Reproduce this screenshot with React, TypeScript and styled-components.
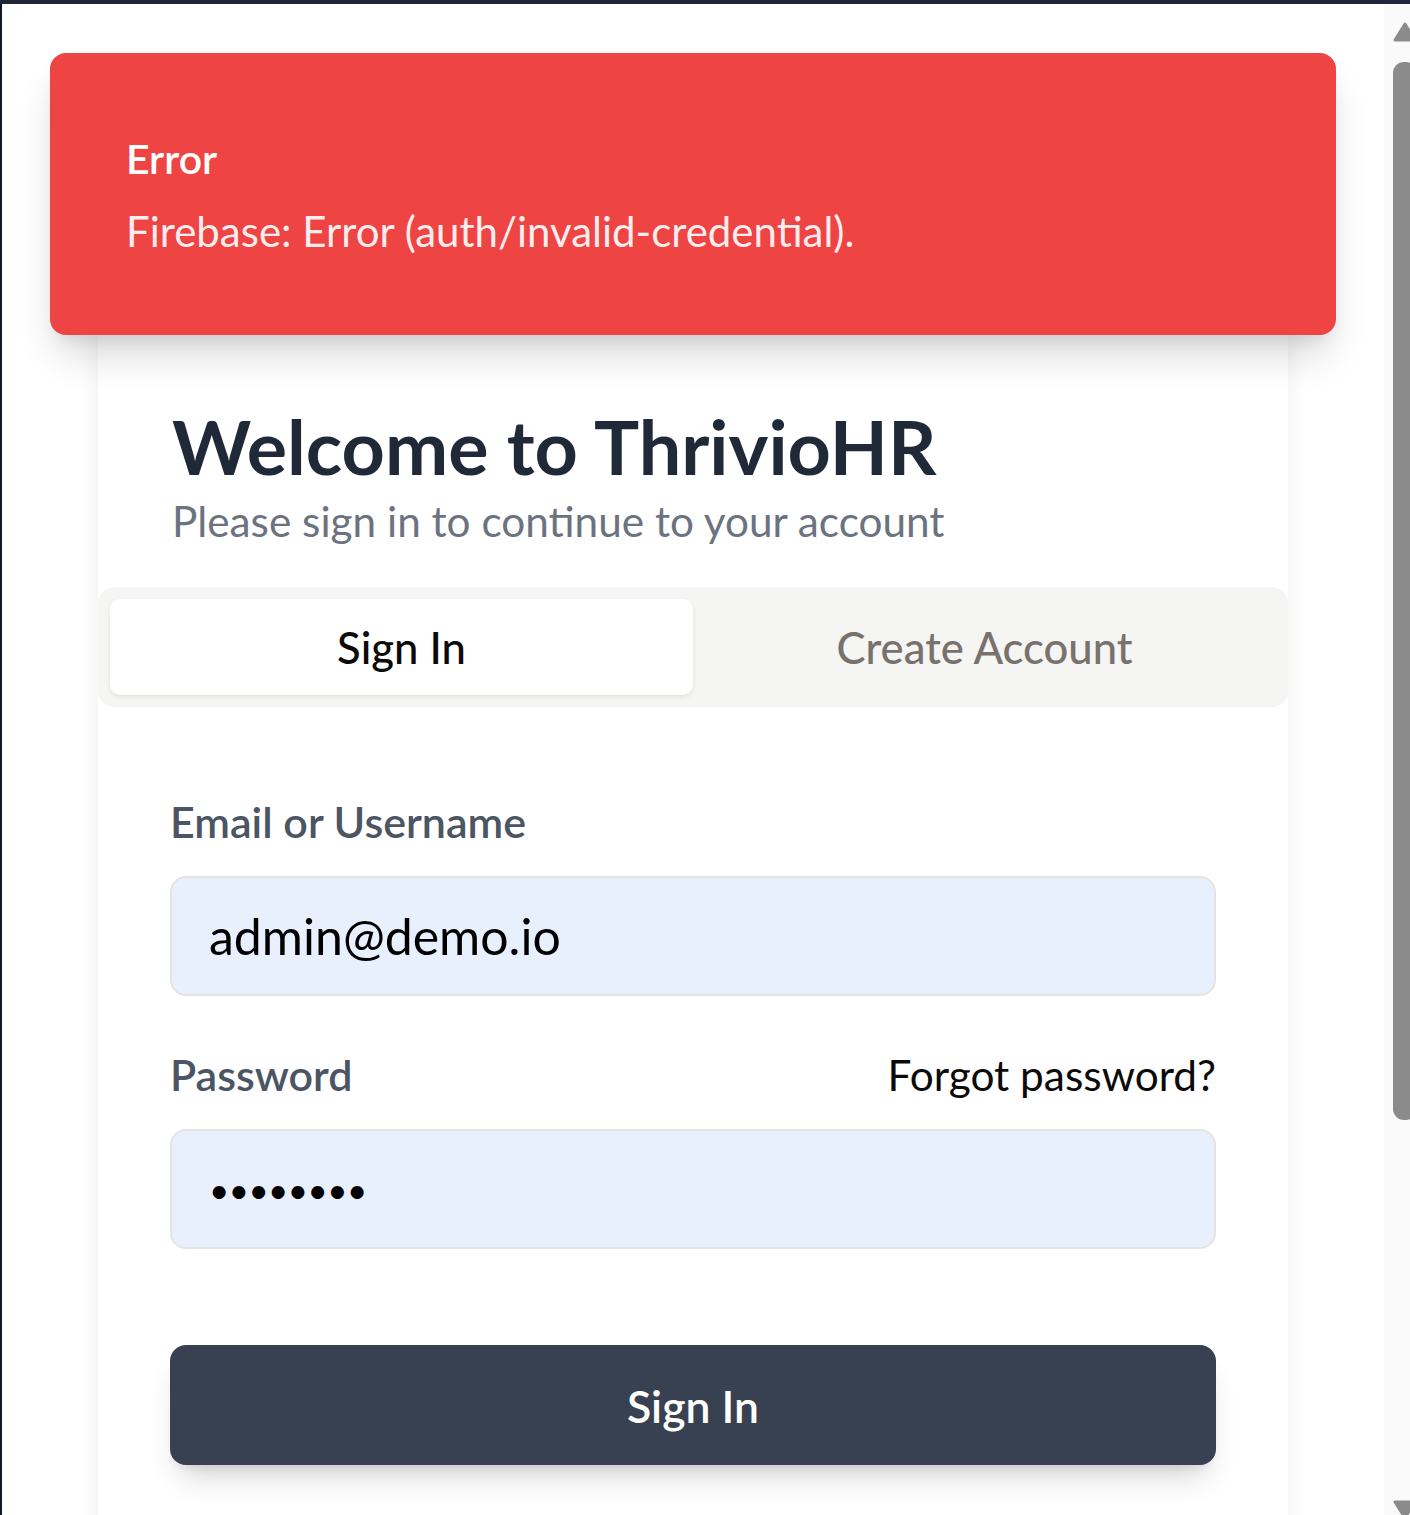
import React from "react";
import styled, { createGlobalStyle } from "styled-components";

const Global = createGlobalStyle`
  html, body { margin: 0; padding: 0; background: #ffffff; }
  body { font-family: Lato, "Noto Sans", sans-serif; }
  * { box-sizing: border-box; }
`;

const Frame = styled.div`
  width: 1410px;
  height: 1515px;
  display: flex;
  flex-direction: column;
  overflow: hidden;
  background: #ffffff;
`;

const TopBar = styled.div`
  height: 4px;
  flex: none;
  background: #1e2637;
`;

const Body = styled.div`
  flex: 1;
  display: flex;
  min-height: 0;
`;

const LeftEdge = styled.div`
  width: 2px;
  flex: none;
  background: #0f172a;
`;

const Main = styled.main`
  flex: 1;
  position: relative;
  overflow: hidden;
  display: flex;
  flex-direction: column;
  align-items: center;
`;

const Toast = styled.div`
  position: absolute;
  top: 49px;
  left: 48px;
  width: 1286px;
  height: 282px;
  z-index: 2;
  background: #ef4444;
  border-radius: 16px;
  padding: 78px 76px 0;
  box-shadow: 0 26px 40px -8px rgba(0, 0, 0, 0.16), 0 10px 18px -8px rgba(0, 0, 0, 0.1);
  display: flex;
  flex-direction: column;
  gap: 15px;
`;

const ToastTitle = styled.div`
  color: #ffffff;
  font-size: 41px;
  font-weight: 600;
  line-height: 56px;
`;

const ToastText = styled.div`
  color: rgba(255, 255, 255, 0.92);
  font-size: 42px;
  font-weight: 400;
  line-height: 58px;
`;

const Card = styled.section`
  width: 1190px;
  margin-top: 316px;
  flex: none;
  background: #ffffff;
  border-radius: 16px;
  box-shadow: 0 4px 22px rgba(0, 0, 0, 0.07);
  padding-bottom: 120px;
`;

const Header = styled.header`
  padding: 80px 74px 39px;
`;

const Title = styled.h1`
  margin: 0;
  color: #1f2937;
  font-size: 75.5px;
  font-weight: 700;
  line-height: 92px;
`;

const Subtitle = styled.p`
  margin: 2px 0 0;
  color: #6b7280;
  font-size: 42.3px;
  font-weight: 400;
  line-height: 54px;
`;

const Tabs = styled.div`
  height: 120px;
  background: #f5f5f4;
  border-radius: 16px;
  padding: 12px;
  display: grid;
  grid-template-columns: 1fr 1fr;
`;

const Tab = styled.button<{ $active?: boolean }>`
  border: none;
  border-radius: 10px;
  font-family: inherit;
  font-size: 43.6px;
  font-weight: 500;
  display: flex;
  align-items: center;
  justify-content: center;
  cursor: pointer;
  background: ${(p) => (p.$active ? "#ffffff" : "transparent")};
  color: ${(p) => (p.$active ? "#0c0a09" : "#78716c")};
  box-shadow: ${(p) => (p.$active ? "0 2px 5px rgba(0,0,0,0.08)" : "none")};
`;

const Form = styled.form`
  padding: 90px 72px 0;
  display: flex;
  flex-direction: column;
`;

const Field = styled.div<{ $gapTop?: number }>`
  display: flex;
  flex-direction: column;
  gap: 30px;
  margin-top: ${(p) => p.$gapTop ?? 0}px;
`;

const LabelRow = styled.div`
  display: flex;
  justify-content: space-between;
  align-items: baseline;
`;

const Label = styled.label`
  color: #4b5563;
  font-size: 43px;
  font-weight: 600;
  line-height: 49px;
`;

const Link = styled.a`
  color: #0c0a09;
  font-size: 42.4px;
  font-weight: 400;
  line-height: 49px;
  text-decoration: none;
`;

const Input = styled.input<{ $masked?: boolean }>`
  height: 120px;
  width: 100%;
  border: 2px solid #e5e4e2;
  border-radius: 16px;
  background: #e8f0fe;
  padding: 0 37px;
  font-family: inherit;
  font-size: ${(p) => (p.$masked ? "35px" : "50px")};
  letter-spacing: ${(p) => (p.$masked ? "-0.6px" : "0")};
  color: #000000;
  outline: none;
`;

const SubmitButton = styled.button`
  margin-top: 96px;
  height: 120px;
  border: none;
  border-radius: 16px;
  background: #374151;
  color: #ffffff;
  font-family: inherit;
  font-size: 44.5px;
  font-weight: 600;
  box-shadow: 0 20px 30px -10px rgba(0, 0, 0, 0.18), 0 8px 12px -8px rgba(0, 0, 0, 0.12);
  cursor: pointer;
`;

const Scrollbar = styled.div`
  width: 26px;
  flex: none;
  background: #fafafa;
  padding: 18px 0 0 9px;
  display: flex;
  flex-direction: column;
  overflow: hidden;
`;

const Thumb = styled.div`
  width: 24px;
  height: 1058px;
  margin-top: 20px;
  background: #8b8b8b;
  border-radius: 11px;
  flex: none;
`;

const Spacer = styled.div`
  flex: 1;
`;

const Arrow = styled.svg`
  width: 24px;
  height: 20px;
  flex: none;
  display: block;
`;

const DownArrow = styled(Arrow)`
  margin-bottom: -5px;
`;

export default function App() {
  return (
    <>
      <Global />
      <Frame>
        <TopBar />
        <Body>
          <LeftEdge />
          <Main>
            <Toast role="alert">
              <ToastTitle>Error</ToastTitle>
              <ToastText>Firebase: Error (auth/invalid-credential).</ToastText>
            </Toast>
            <Card>
              <Header>
                <Title>Welcome to ThrivioHR</Title>
                <Subtitle>Please sign in to continue to your account</Subtitle>
              </Header>
              <Tabs>
                <Tab $active type="button">Sign In</Tab>
                <Tab type="button">Create Account</Tab>
              </Tabs>
              <Form onSubmit={(e) => e.preventDefault()}>
                <Field>
                  <Label htmlFor="email">Email or Username</Label>
                  <Input id="email" type="text" defaultValue="admin@demo.io" />
                </Field>
                <Field $gapTop={54}>
                  <LabelRow>
                    <Label htmlFor="password">Password</Label>
                    <Link href="#">Forgot password?</Link>
                  </LabelRow>
                  <Input id="password" type="password" $masked defaultValue="12345678" />
                </Field>
                <SubmitButton type="submit">Sign In</SubmitButton>
              </Form>
            </Card>
          </Main>
          <Scrollbar>
            <Arrow viewBox="0 0 24 20">
              <path d="M12 2 L22 18 L2 18 Z" fill="#8b8b8b" stroke="#8b8b8b" strokeWidth="3" strokeLinejoin="round" />
            </Arrow>
            <Thumb />
            <Spacer />
            <DownArrow viewBox="0 0 24 20">
              <path d="M2 2 L22 2 L12 18 Z" fill="#8b8b8b" stroke="#8b8b8b" strokeWidth="3" strokeLinejoin="round" />
            </DownArrow>
          </Scrollbar>
        </Body>
      </Frame>
    </>
  );
}
